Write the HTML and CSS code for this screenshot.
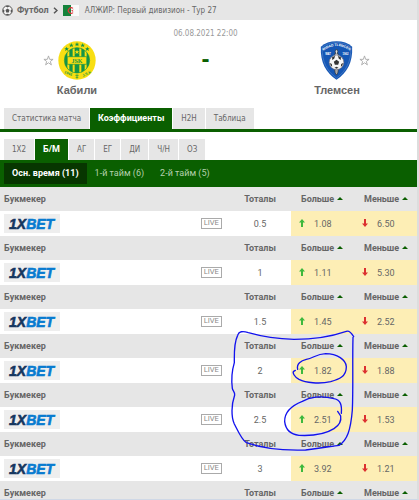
FILE: index.html
```
<!DOCTYPE html>
<html lang="ru">
<head>
  <meta charset="UTF-8">
  <meta name="viewport" content="width=device-width, initial-scale=1.0">
  <title>Кабили - Тлемсен</title>
  <link rel="stylesheet" href="styles.css">
</head>
<body>
  <div class="page">
    <header class="breadcrumb">
      <svg class="ball" viewBox="0 0 22 22" aria-hidden="true">
        <circle cx="11" cy="11" r="9.5" fill="#f4f4f4" stroke="#555" stroke-width="2"/>
        <path d="M11 7l4 3-1.500 5h-5L7 10z M7 2.500l4 2.500 4-2.500-4-1z M2 9l3 2-1 5-2.500-3z M20 9l-3 2 1 5 2.500-3z M7 19l4-1.500 4 1.500-4 1.500z" fill="#555"/>
      </svg>
      <a class="sport" href="#">Футбол</a>
      <svg class="chevron" viewBox="0 0 5 7" aria-hidden="true"><path d="M1 .7l3 2.800-3 2.800" fill="none" stroke="#555" stroke-width="1.500"/></svg>
      <svg class="flag" viewBox="0 0 48 33" aria-hidden="true">
        <path fill="#16833c" d="M0 0h24v33H0z"/><path fill="#fafafa" d="M24 0h24v33H24z"/>
        <path d="M30 10a8.500 8.500 0 1 0 0 13" fill="none" stroke="#e0393e" stroke-width="3.500"/>
        <path d="M24 16.500l8-3-3 4 3 4z" fill="#e0393e"/>
      </svg>
      <a class="league" href="#">АЛЖИР: Первый дивизион - Тур 27</a>
    </header>

    <section class="match">
      <div class="team">
        <div class="crest-row">
          <button class="star" aria-label="Добавить Кабили в избранное"><svg viewBox="0 0 24 24"><path d="M12 2l2.500 7.500H22l-6 4.600 2.300 7.400-6.300-4.500-6.300 4.500L8 14.100 2 9.500h7.500z"/></svg></button>
          <svg class="crest" viewBox="0 0 114 117" aria-hidden="true">
            <ellipse cx="57" cy="58.500" rx="56" ry="58" fill="#f8de12"/>
            <clipPath id="disc"><circle cx="57" cy="58" r="38"/></clipPath>
            <g clip-path="url(#disc)" fill="#139447">
              <path d="M19 18h9v80h-9z M34 18h10v80H34z M50 18h14v80H50z M70 18h10v80H70z M86 18h9v80h-9z"/>
            </g>
            <circle cx="57" cy="58" r="38" fill="none" stroke="#139447" stroke-width="2"/>
            <path d="M28 47h58v23H28z" fill="#f8de12" stroke="#139447" stroke-width="2"/>
            <text class="crest-name" x="57" y="65" text-anchor="middle">JSK</text>
            <path id="st" d="M57 3l2 5h5l-4 3 2 5-5-3-5 3 2-5-4-3h5z" fill="#139447"/>
            <use href="#st" x="-17" y="3"/><use href="#st" x="17" y="3"/>
            <use href="#st" x="-31" y="14"/><use href="#st" x="31" y="14"/>
            <path d="M57 26l2 5h5l-4 3 2 5-5-3-5 3 2-5-4-3h5z" fill="#f8de12"/>
            <path d="M52 103h10 M53 109h8 M57 100v13" stroke="#139447" stroke-width="2"/>
            <text class="crest-year" x="18" y="96" transform="rotate(22 18 96)">1946</text>
            <text class="crest-year" x="75" y="107" transform="rotate(-24 75 107)">J.S.K</text>
          </svg>
        </div>
        <a class="team-name" href="#">Кабили</a>
      </div>

      <div class="score">
        <time>06.08.2021 22:00</time>
        <strong>-</strong>
      </div>

      <div class="team">
        <div class="crest-row away">
          <svg class="crest shield" viewBox="0 0 98 117" aria-hidden="true">
            <path d="M49 1C30 1 14 6 2 17c-2 47 15 78 47 99 32-21 49-52 47-99C84 6 68 1 49 1z" fill="#1557b5"/>
            <path d="M49 5C32 5 18 9 6 19c-1 43 14 71 43 92 29-21 44-49 43-92C80 9 66 5 49 5z" fill="none" stroke="#5583c8" stroke-width="2"/>
            <path id="arc" d="M10 29q39-28 78 0" fill="none"/>
            <text class="shield-name"><textPath href="#arc" startOffset="50%" text-anchor="middle">WIDAD TLEMCEN</textPath></text>
            <text class="shield-year" x="15" y="42">WAT</text>
            <text class="shield-year" x="67" y="42">1962</text>
            <path d="M49 24l4 7-2 7h3v8h-10v-8h3l-2-7z" fill="#ddd" stroke="#333" stroke-width="2"/>
            <path d="M43 82h12l-2 14-4 6-4-6z" fill="#aaa" stroke="#333" stroke-width="2"/>
            <circle cx="49" cy="64" r="22" fill="#f6f6f6" stroke="#667" stroke-width="2"/>
            <path d="M49 56l8 6-3 9H44l-3-9z M36 48l9-3-3 8-6 4z M62 48l-9-3 3 8 6 4z M29 66l6 3 1 8-4-3z M69 66l-6 3-1 8 4-3z M43 80l6-3 6 3-6 3z" fill="#333"/>
          </svg>
          <button class="star" aria-label="Добавить Тлемсен в избранное"><svg viewBox="0 0 24 24"><path d="M12 2l2.500 7.500H22l-6 4.600 2.300 7.400-6.300-4.500-6.300 4.500L8 14.100 2 9.500h7.500z"/></svg></button>
        </div>
        <a class="team-name" href="#">Тлемсен</a>
      </div>
    </section>

    <nav class="tabs main-tabs">
      <a href="#">Статистика матча</a>
      <a class="active" href="#">Коэффициенты</a>
      <a href="#">H2H</a>
      <a href="#">Таблица</a>
    </nav>
    <nav class="tabs bet-tabs">
      <a href="#">1X2</a>
      <a class="active" href="#">Б/М</a>
      <a href="#">АГ</a>
      <a href="#">ЕГ</a>
      <a href="#">ДИ</a>
      <a href="#">Ч/Н</a>
      <a href="#">ОЗ</a>
    </nav>
    <nav class="periods">
      <a class="active" href="#">Осн. время (11)</a>
      <a href="#">1-й тайм (6)</a>
      <a href="#">2-й тайм (5)</a>
    </nav>

    <table class="odds">
      <colgroup><col><col class="col-total"><col class="col-odd"><col class="col-odd"></colgroup>
      <tbody id="oddsBody"></tbody>
    </table>

    <!-- пометки от руки поверх таблицы -->
    <svg class="marks" viewBox="0 0 630 570" aria-hidden="true">
      <path d="M434 80C428 70 421 61 412 64C360 82 308 88 255 88C215 87 160 80 118 68C100 62 90 64 86 76C74 100 76 130 76 158C68 185 66 205 70 235C71 242 78 245 77 255C67 285 66 320 76 342C90 370 100 392 112 398C160 415 230 422 290 420C350 412 372 408 390 406C415 390 425 360 430 300C433 230 430 160 432 82"/>
      <path d="M266 178C262 162 276 152 292 148C314 144 322 132 350 131C385 131 411 150 412 170C412 200 390 208 365 215C330 223 290 218 270 208C255 200 250 187 254 184L259 181"/>
      <path d="M397 310C399 285 395 270 375 266C335 255 300 262 280 274C245 288 226 310 227 335C230 360 245 373 270 376C310 378 350 372 375 356C392 345 397 330 395 318L386 304"/>
    </svg>
  </div>

  <script>
    const odds = [
      ['0.5', '1.08', '6.50'],
      ['1', '1.11', '5.30'],
      ['1.5', '1.45', '2.52'],
      ['2', '1.82', '1.88'],
      ['2.5', '2.51', '1.53'],
      ['3', '3.92', '1.21']
    ];

    const head = `
      <tr class="head">
        <th>Букмекер</th>
        <th class="total">Тоталы</th>
        <th><a href="#">Больше<i class="sort"></i></a></th>
        <th><a href="#">Меньше<i class="sort"></i></a></th>
      </tr>`;

    const arrow = dir => `<svg class="arrow ${dir}" viewBox="0 0 6 8"><path d="M3 0l3 3.500H4V8H2V3.500H0z"/></svg>`;

    const logo = `<svg viewBox="0 0 56 19"><text x="5" y="15"><tspan class="one-x">1X</tspan><tspan class="bet">BET</tspan></text></svg>`;

    document.getElementById('oddsBody').innerHTML = odds.map(([total, over, under]) => `
      ${head}
      <tr>
        <td><div class="bookmaker">
          <a class="logo" href="#">${logo}</a>
          <span class="live">LIVE</span>
        </div></td>
        <td class="total">${total}</td>
        <td class="odd">${arrow('up')}${over}</td>
        <td class="odd">${arrow('down')}${under}</td>
      </tr>`).join('') + head;
  </script>
</body>
</html>
```
FILE: styles.css
```
* {
  box-sizing: border-box;
}

body {
  margin: 0;
  background: #fff;
  color: #666;
  font-family: Roboto, "DejaVu Sans", sans-serif;
  font-size: 9px;
}

a {
  color: inherit;
  text-decoration: none;
}

.page {
  position: relative;
  height: 100vh;
  overflow: hidden;
  border-right: 2px solid #ddd;
  border-bottom: 1px solid #cfd8e6;
}

.breadcrumb {
  display: flex;
  align-items: center;
  height: 20px;
  padding: 0 2px;
  background: #e6e6e6;
}

.league,
.score time,
.tabs a {
  font-family: "DejaVu Sans Condensed", "DejaVu Sans", sans-serif;
  font-size: 8px;
}

.ball {
  width: 11px;
  height: 11px;
}

.sport {
  margin-left: 4px;
  font-weight: bold;
}

.chevron {
  width: 5px;
  height: 7px;
  margin: 0 5px 0 4px;
}

.flag {
  width: 16px;
  height: 11px;
  margin-right: 6px;
}

.match {
  display: grid;
  grid-template-columns: 154px 1fr 160px;
  height: 88px;
}

.team {
  display: flex;
  flex-direction: column;
  align-items: center;
  padding-top: 21px;
}

.crest-row {
  display: flex;
  align-items: center;
  gap: 4px;
  margin-right: 16px;
}

.crest-row.away {
  gap: 6px;
  margin-right: 0;
  margin-left: 16px;
}

.crest {
  width: 38px;
  height: 39px;
}

.shield {
  width: 33px;
}

.crest-name {
  font: bold 18px "Liberation Serif", serif;
  fill: #139447;
}

.crest-year {
  font: bold 11px "Liberation Sans", sans-serif;
  fill: #139447;
}

.shield-name {
  font: bold 10px "Liberation Sans", sans-serif;
  fill: #fff;
}

.shield-year {
  font: bold 8px "Liberation Sans", sans-serif;
  fill: #fff;
}

.star {
  width: 11px;
  height: 11px;
  padding: 0;
  border: 0;
  background: none;
}

.star svg {
  display: block;
  overflow: visible;
}

.star path {
  fill: none;
  stroke: #aaa;
  stroke-width: 2;
}

.team-name {
  margin-top: 2px;
  font: bold 11px/16px "Liberation Sans", sans-serif;
}

.score {
  display: flex;
  flex-direction: column;
  align-items: center;
  padding-top: 7px;
}

.score time {
  color: #999;
  line-height: 14px;
}

.score strong {
  margin-top: 6px;
  color: #0a5f00;
  font: bold 24px/24px "Liberation Sans", sans-serif;
}

.tabs {
  display: flex;
  gap: 1px;
  padding-left: 4px;
  color: #666;
}

.tabs a {
  padding: 0 8px;
  background: #e6e6e6;
  line-height: 21px;
}

.tabs .active {
  background: #0a5f00;
  color: #fff;
  font-family: Roboto, "DejaVu Sans", sans-serif;
  font-size: 9px;
  font-weight: bold;
}

.main-tabs {
  border-bottom: 3px solid #0a5f00;
}

.bet-tabs {
  padding-top: 7px;
}

.periods {
  display: flex;
  padding: 3px 4px;
  background: #0a5f00;
  color: #b4d0ac;
}

.periods a {
  padding: 0 8px;
  line-height: 21px;
}

.periods .active {
  background: #073600;
  color: #fff;
  font-weight: bold;
}

.odds {
  width: 100%;
  border-collapse: collapse;
  table-layout: fixed;
}

.col-total {
  width: 62px;
}

.col-odd {
  width: 63px;
}

.odds th,
.odds td {
  height: 25px;
  padding: 0;
  text-align: left;
}

.odds .head th {
  height: 24px;
  padding-left: 4px;
  background: #e6e6e6;
}

.odds .head th:nth-child(n+3) {
  padding-left: 10px;
}

.odds .head .total,
.odds .total {
  padding: 0;
  text-align: center;
}

.sort {
  display: inline-block;
  margin: 0 0 2px 3px;
  border: 3px solid transparent;
  border-top: 0;
  border-bottom-color: #0a5f00;
}

.bookmaker {
  display: flex;
  align-items: center;
  justify-content: space-between;
  padding: 0 7px 0 4px;
}

.logo {
  width: 56px;
  height: 19px;
  background: #eee;
}

.logo svg {
  display: block;
  width: 56px;
  height: 19px;
}

.logo text {
  font: italic bold 14px "Liberation Sans", sans-serif;
  stroke-width: 0.6;
}

.one-x {
  fill: #16365f;
  stroke: #16365f;
}

.bet {
  fill: #087bd0;
  stroke: #087bd0;
}

.live {
  padding: 0 2px;
  border: 1px solid #aaa;
  color: #888;
  font: 7px/9px "DejaVu Sans", sans-serif;
}

.odds .odd {
  padding-left: 8px;
  background: #fdeeb5;
}

.arrow {
  width: 6px;
  height: 8px;
  margin-right: 9px;
}

.up {
  fill: #3db83d;
}

.down {
  fill: #dc3030;
  transform: rotate(180deg);
}

.marks {
  position: absolute;
  top: 310px;
  right: -2px;
  width: 210px;
  height: 190px;
}

.marks path {
  fill: none;
  stroke: #1212ee;
  stroke-width: 4;
  stroke-linecap: round;
}
```
